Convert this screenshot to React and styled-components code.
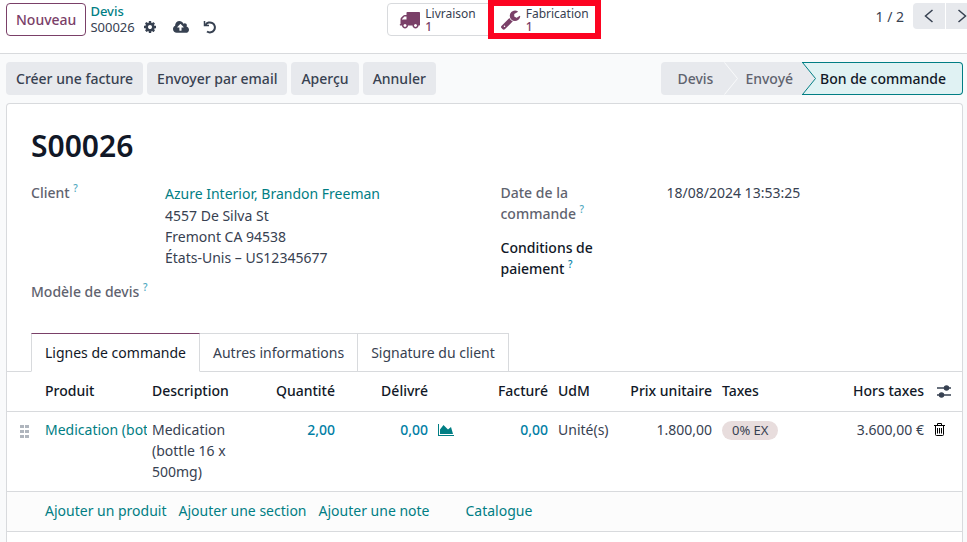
import React, {useState} from 'react';
import styled, {createGlobalStyle, css} from 'styled-components';

// ---- colours ------
const border = '#d8dadd';
const teal = '#017e84';
const plum = '#7a4068';
const text = '#374151';
const dark = '#111827';
const muted = '#5f636f';
const grey = '#e7e9ed';

// ---- styles ------
const GlobalStyle = createGlobalStyle`
    *, *::before {
        box-sizing: border-box;
    }

    body {
        margin: 0;
        background: #f9fafb;
        color: ${text};
        font-family: "Noto Sans", "Open Sans", sans-serif;
        font-size: 14px;
        line-height: 21px;
    }

    button {
        font: inherit;
        color: inherit;
        border: 0;
        padding: 0;
        background: none;
        cursor: pointer;
    }

    a {
        color: ${teal};
        text-decoration: none;
    }

    svg {
        display: block;
        flex: none;
    }
`;

const Page = styled.div`
    display: flex;
    flex-direction: column;
    min-height: 100vh;
    overflow: hidden;
`;

const ControlPanel = styled.header`
    display: grid;
    grid-template-columns: 1fr auto 1fr;
    align-items: start;
    height: 54px;
    padding: 3px 0 0 6px;
    background: #fff;
    border-bottom: 1px solid ${border};
`;

const Crumbs = styled.div`
    display: flex;
    gap: 4px;
`;

const NewButton = styled.button`
    height: 33px;
    padding: 0 9px;
    border: 1px solid ${plum};
    border-radius: 4px;
    color: ${plum};
    font-weight: 500;
`;

const Trail = styled.nav`
    display: flex;
    flex-direction: column;
    font-size: 13px;
    line-height: 16px;

    a {
        font-weight: 500;
    }
`;

const Current = styled.div`
    display: flex;
    align-items: center;
    gap: 8px;
`;

const RecordActions = styled.div`
    display: flex;
    gap: 14px;
    margin-left: 8px;
`;

const StatButtons = styled.div`
    display: flex;
    margin-left: 12px;
`;

const StatButton = styled.button`
    position: relative;
    display: flex;
    align-items: center;
    gap: 5px;
    height: 33px;
    padding: 0 14px 0 11px;
    border: 1px solid ${border};
    border-radius: 4px 0 0 4px;
    font-size: 12px;
    line-height: 13px;
    text-align: left;

    & + & {
        padding: 0 8px 0 9px;
        border-left: 0;
        border-radius: 0 4px 4px 0;
    }

    svg {
        color: ${plum};
    }

    strong {
        display: block;
        color: ${plum};
        font-weight: 500;
    }

    /* red frame drawn over the button that needs attention */
    ${props => props.$highlight && css`
        &::before {
            content: "";
            position: absolute;
            inset: -4px -4px -4px -3px;
            border: 6px solid #fc0421;
        }
    `}
`;

const Pager = styled.div`
    display: flex;
    align-items: center;
    justify-self: end;
    gap: 1px;
    margin-right: -11px;

    span {
        margin-right: 8px;
    }
`;

const PagerButton = styled.button`
    display: flex;
    align-items: center;
    justify-content: center;
    width: 32px;
    height: 26px;
    background: ${grey};
    border-radius: ${props => props.$side === 'left' ? '4px 0 0 4px' : '0 4px 4px 0'};
`;

const ActionBar = styled.div`
    display: flex;
    justify-content: space-between;
    padding: 8px 4px 8px 6px;
`;

const Actions = styled.div`
    display: flex;
    gap: 4px;
`;

const ActionButton = styled.button`
    height: 33px;
    padding: 0 10px;
    border-radius: 4px;
    background: ${grey};
    font-weight: 500;
    white-space: nowrap;
`;

const StatusBar = styled.div`
    display: flex;
    height: 33px;
`;

const Step = styled.button`
    padding: 0 9px 0 7px;
    background: ${grey};
    color: ${muted};
    font-weight: 500;
    white-space: nowrap;

    &:first-child {
        padding: 0 11px 0 16px;
        border-radius: 4px 0 0 4px;
    }

    ${props => props.$active && css`
        padding: 0 16px 0 4px;
        border: 1px solid ${teal};
        border-left: 0;
        border-radius: 0 4px 4px 0;
        background: #e0f2f3;
        color: ${dark};
    `}
`;

const Sheet = styled.main`
    flex: 1;
    margin: 0 4px 0 6px;
    border: 1px solid ${border};
    border-bottom: 0;
    border-radius: 4px 4px 0 0;
    background: #fff;
`;

const Title = styled.h1`
    margin: 23px 24px 17px;
    color: ${dark};
    font-size: 30px;
    font-weight: 600;
    line-height: 38px;
`;

const FieldGroups = styled.div`
    display: grid;
    grid-template-columns: 1fr 1fr;
    gap: 32px;
    padding: 0 24px;
`;

const Fields = styled.dl`
    display: grid;
    grid-template-columns: ${props => props.$labelWidth}px 1fr;
    align-content: start;
    row-gap: 13px;
    margin: 0;

    dd {
        margin: 0;
    }
`;

const Label = styled.dt`
    max-width: 122px;
    color: ${props => props.$required ? dark : muted};
    font-weight: 500;
`;

const Help = styled.sup`
    color: ${props => props.$strong ? '#0180a5' : '#4fa9c0'};
    font-size: 10px;
    line-height: 0;
`;

const Partner = styled.a`
    display: block;
    line-height: 23px;
`;

const Address = styled.address`
    font-style: normal;
`;

const Tabs = styled.div`
    display: flex;
    margin-top: 31px;
    padding-left: 24px;
    box-shadow: inset 0 -1px ${border};
`;

const Tab = styled.button`
    height: 39px;
    padding: 0 13px;
    border: 1px solid ${border};
    border-left-width: 0;
    white-space: nowrap;

    ${props => props.$active && css`
        border-left-width: 1px;
        border-top-color: ${plum};
        border-bottom-color: #fff;
        background: #fff;
        color: ${dark};
    `}
`;

const Table = styled.table`
    width: 100%;
    table-layout: fixed;
    border-collapse: collapse;

    tr {
        border-bottom: 1px solid ${border};
    }

    tfoot {
        background: #fcfcfc;
    }
`;

const cell = css`
    text-align: ${props => props.$right ? 'right' : 'left'};
    vertical-align: top;
    white-space: ${props => props.$wrap ? 'normal' : 'nowrap'};
`;

const Th = styled.th`
    ${cell}
    padding: 8px 5px 10px;
    color: ${dark};
    font-weight: 500;
`;

const Td = styled.td`
    ${cell}
    padding: 7px 5px 9px;
    overflow: hidden;
`;

const Changed = styled.span`
    color: #0180a5;
    font-weight: 500;
`;

const IconButton = styled.button`
    display: flex;
    align-items: center;
    height: 21px;
    color: ${props => props.$color || text};
`;

const Handle = styled(IconButton)`
    margin-left: 8px;
    height: 24px;
`;

const Tag = styled.span`
    display: inline-block;
    padding: 0 10px;
    border-radius: 10px;
    background: #e8dddd;
    font-size: 13px;
    line-height: 19px;
`;

const AddLinks = styled.div`
    display: flex;
    gap: 12px;
    padding: 1px 0;

    a:last-child {
        margin-left: 24px;
    }
`;

// ---- icons ------
const paths = {
    cog: ['0 0 1792 1792', 'M1152 896q0-106-75-181t-181-75-181 75-75 181 75 181 181 75 181-75 75-181zm512-109v222q0 12-8 23t-20 13l-185 28q-19 54-39 91 35 50 107 138 10 12 10 25t-9 23q-27 37-99 108t-94 71q-12 0-26-9l-138-108q-44 23-91 38-16 136-29 186-7 28-36 28h-222q-14 0-24.5-8.5t-11.5-21.5l-28-184q-49-16-90-37l-141 107q-10 9-25 9-14 0-25-11-126-114-165-168-7-10-7-23 0-12 8-23 15-21 51-66.5t54-70.5q-27-50-41-99l-183-27q-13-2-21-12.5t-8-23.5v-222q0-12 8-23t19-13l186-28q14-46 39-92-40-57-107-138-10-12-10-24 0-10 9-23 26-36 98.5-107.5t94.5-71.5q13 0 26 10l138 107q44-23 91-38 16-136 29-186 7-28 36-28h222q14 0 24.5 8.5t11.5 21.5l28 184q49 16 90 37l142-107q9-9 24-9 13 0 25 10 129 119 165 170 7 8 7 22 0 12-8 23-15 21-51 66.5t-54 70.5q26 50 41 98l183 28q13 2 21 12.5t8 23.5z'],
    cloud: ['-64 0 1920 1792', 'M1216 864q0-14-9-23l-352-352q-9-9-23-9t-23 9l-351 351q-10 12-10 24 0 14 9 23t23 9h224v352q0 13 9.5 22.5t22.5 9.5h192q13 0 22.5-9.5t9.5-22.5v-352h224q13 0 22.5-9.5t9.5-22.5zm640 288q0 159-112.5 271.5t-271.5 112.5h-1088q-185 0-316.5-131.5t-131.5-316.5q0-130 70-240t188-165q-2-30-2-43 0-212 150-362t362-150q156 0 285.5 87t188.5 231q71-62 166-62 106 0 181 75t75 181q0 76-41 138 130 31 213.5 135.5t83.5 238.5z'],
    truck: ['0 0 1792 1792', 'M640 1408q0-52-38-90t-90-38-90 38-38 90 38 90 90 38 90-38 38-90zm-384-512h384v-256h-158q-13 0-22 9l-195 195q-9 9-9 22v30zm1280 512q0-52-38-90t-90-38-90 38-38 90 38 90 90 38 90-38 38-90zm256-1088v1024q0 15-4 26.5t-13.5 18.5-16.5 11.5-23.5 6-22.5 2-25.5 0-22.5-.5q0 106-75 181t-181 75-181-75-75-181h-384q0 106-75 181t-181 75-181-75-75-181h-64q-3 0-22.5.5t-25.5 0-22.5-2-23.5-6-16.5-11.5-13.5-18.5-4-26.5q0-26 19-45t45-19v-320q0-8-.5-35t0-38 2.5-34.5 6.5-37 14-30.5 22.5-30l198-198q19-19 50.5-32t58.5-13h160v-192q0-26 19-45t45-19h1024q26 0 45 19t19 45z'],
    wrench: ['0 0 1792 1792', 'M448 1472q0-26-19-45t-45-19-45 19-19 45 19 45 45 19 45-19 19-45zm644-420l-682 682q-37 37-90 37-52 0-91-37l-106-108q-38-36-38-90 0-53 38-91l681-681q39 98 114.5 173.5t173.5 114.5zm634-435q0 39-23 106-47 134-164.5 217.5t-258.5 83.5q-185 0-316.5-131.5t-131.5-316.5 131.5-316.5 316.5-131.5q58 0 121.5 16.5t107.5 46.5q16 11 16 28t-16 28l-293 169v224l193 107q5-3 79-48.5t135.5-81 70.5-35.5q15 0 23.5 10t8.5 25z'],
    chart: ['0 0 2048 1792', 'M2048 1536v128h-2048v-1536h128v1408h1920zm-384-1024l256 896h-1664v-576l448-576 576 576z'],
    grip: ['0 0 9 13', 'M0 0h4v3H0zM5 0h4v3H5zM0 5h4v3H0zM5 5h4v3H5zM0 10h4v3H0zM5 10h4v3H5z'],
};

function Icon({name, width, height}) {
    const [viewBox, d] = paths[name];
    return (
        <svg width={width} height={height || width} viewBox={viewBox} fill="currentColor" aria-hidden="true">
            <path d={d}/>
        </svg>
    );
}

function StrokeIcon({width, height, children, strokeWidth = 1.5}) {
    return (
        <svg width={width} height={height} viewBox={`0 0 ${width} ${height}`} fill="none" stroke="currentColor"
             strokeWidth={strokeWidth} aria-hidden="true">
            {children}
        </svg>
    );
}

/**
 * Pointed joint between two steps of the status bar.
 */
function Arrow({active}) {
    return (
        <svg width="14" height="33" viewBox="0 0 14 33" aria-hidden="true">
            <rect width="14" height="33" fill={grey}/>
            {active && <path d="M0 0H14V33H0L13.5 16.5Z" fill="#e0f2f3"/>}
            {active && <path d="M0 .5H14M0 32.5H14" stroke={teal}/>}
            <path d="M.5 .5L13.5 16.5L.5 32.5" fill="none" stroke={active ? teal : '#f9fafb'}/>
        </svg>
    );
}

// ---- data ------
const tabs = ['Lignes de commande', 'Autres informations', 'Signature du client'];
const actions = ['Créer une facture', 'Envoyer par email', 'Aperçu', 'Annuler'];
const links = ['Ajouter un produit', 'Ajouter une section', 'Ajouter une note', 'Catalogue'];

const Col = styled.col`
    width: ${props => props.$width}px;
`;
const columns = [33, 107, 101, 92, 93, 24, 96, 68, 96, 75, 137, 33];

function OrderLines() {
    return (
        <Table>
            <colgroup>
                {columns.map((width, index) => <Col key={index} $width={width}/>)}
            </colgroup>
            <thead>
                <tr>
                    <Th/>
                    <Th>Produit</Th>
                    <Th>Description</Th>
                    <Th $right>Quantité</Th>
                    <Th $right>Délivré</Th>
                    <Th/>
                    <Th $right>Facturé</Th>
                    <Th>UdM</Th>
                    <Th $right>Prix unitaire</Th>
                    <Th>Taxes</Th>
                    <Th $right>Hors taxes</Th>
                    <Th>
                        <IconButton aria-label="Colonnes">
                            <StrokeIcon width={18} height={14}>
                                <path d="M3 4H17M3 11H17"/>
                                <circle cx="12.5" cy="4" r="2" fill="currentColor"/>
                                <circle cx="7.5" cy="11" r="2" fill="currentColor"/>
                            </StrokeIcon>
                        </IconButton>
                    </Th>
                </tr>
            </thead>
            <tbody>
                <tr>
                    <Td>
                        <Handle $color="#afb5bd" aria-label="Déplacer"><Icon name="grip" width={9} height={13}/></Handle>
                    </Td>
                    <Td><a href="#produit">Medication (bot</a></Td>
                    <Td $wrap>Medication (bottle 16 x 500mg)</Td>
                    <Td $right><Changed>2,00</Changed></Td>
                    <Td $right><Changed>0,00</Changed></Td>
                    <Td>
                        <IconButton $color={teal} aria-label="Prévisions"><Icon name="chart" width={16} height={14}/></IconButton>
                    </Td>
                    <Td $right><Changed>0,00</Changed></Td>
                    <Td>Unité(s)</Td>
                    <Td $right>1.800,00</Td>
                    <Td><Tag>0% EX</Tag></Td>
                    <Td $right>3.600,00 €</Td>
                    <Td>
                        <IconButton $color="#000" aria-label="Supprimer">
                            <StrokeIcon width={11} height={13} strokeWidth={1}>
                                <path d="M0 2.5H11M3.5 2V.5H7.5V2M1.5 3V11.5Q1.5 12.5 2.5 12.5H8.5Q9.5 12.5 9.5 11.5V3M3.5 5V10.5M5.5 5V10.5M7.5 5V10.5"/>
                            </StrokeIcon>
                        </IconButton>
                    </Td>
                </tr>
            </tbody>
            <tfoot>
                <tr>
                    <Td/>
                    <Td colSpan={11}>
                        <AddLinks>
                            {links.map(link => <a href="#lignes" key={link}>{link}</a>)}
                        </AddLinks>
                    </Td>
                </tr>
            </tfoot>
        </Table>
    );
}

function RecordIcons() {
    return (
        <>
            <button aria-label="Actions"><Icon name="cog" width={14}/></button>
            <RecordActions>
                <button aria-label="Enregistrer"><Icon name="cloud" width={16} height={15}/></button>
                <button aria-label="Annuler les modifications">
                    <StrokeIcon width={13} height={13} strokeWidth={2}>
                        <path d="M2.5 4A5 5 0 1 1 4 10.5"/>
                        <path d="M1.5 0V4.5H6" strokeWidth="1.5"/>
                    </StrokeIcon>
                </button>
            </RecordActions>
        </>
    );
}

function App() {
    const [tab, setTab] = useState(0);

    return (
        <Page>
            <GlobalStyle/>
            <ControlPanel>
                <Crumbs>
                    <NewButton>Nouveau</NewButton>
                    <Trail>
                        <a href="#devis">Devis</a>
                        <Current>
                            S00026
                            <RecordIcons/>
                        </Current>
                    </Trail>
                </Crumbs>
                <StatButtons>
                    <StatButton>
                        <Icon name="truck" width={21}/>
                        <span>Livraison<strong>1</strong></span>
                    </StatButton>
                    <StatButton $highlight>
                        <Icon name="wrench" width={21}/>
                        <span>Fabrication<strong>1</strong></span>
                    </StatButton>
                </StatButtons>
                <Pager>
                    <span>1 / 2</span>
                    <PagerButton $side="left" aria-label="Précédent">
                        <StrokeIcon width={10} height={14}><path d="M8.5 1L1.5 7L8.5 13"/></StrokeIcon>
                    </PagerButton>
                    <PagerButton $side="right" aria-label="Suivant">
                        <StrokeIcon width={10} height={14}><path d="M1.5 1L8.5 7L1.5 13"/></StrokeIcon>
                    </PagerButton>
                </Pager>
            </ControlPanel>

            <ActionBar>
                <Actions>
                    {actions.map(action => <ActionButton key={action}>{action}</ActionButton>)}
                </Actions>
                <StatusBar>
                    <Step>Devis</Step>
                    <Arrow/>
                    <Step>Envoyé</Step>
                    <Arrow active/>
                    <Step $active>Bon de commande</Step>
                </StatusBar>
            </ActionBar>

            <Sheet>
                <Title>S00026</Title>
                <FieldGroups>
                    <Fields $labelWidth={134}>
                        <Label>Client <Help>?</Help></Label>
                        <dd>
                            <Partner href="#client">Azure Interior, Brandon Freeman</Partner>
                            <Address>4557 De Silva St<br/>Fremont CA 94538<br/>États-Unis – US12345677</Address>
                        </dd>
                        <Label>Modèle de devis <Help>?</Help></Label>
                        <dd/>
                    </Fields>
                    <Fields $labelWidth={166}>
                        <Label>Date de la commande <Help>?</Help></Label>
                        <dd>18/08/2024 13:53:25</dd>
                        <Label $required>Conditions de paiement <Help $strong>?</Help></Label>
                        <dd/>
                    </Fields>
                </FieldGroups>

                <Tabs role="tablist">
                    {tabs.map((name, index) => (
                        <Tab key={name} role="tab" aria-selected={index === tab} $active={index === tab}
                             onClick={() => setTab(index)}>
                            {name}
                        </Tab>
                    ))}
                </Tabs>
                <OrderLines/>
            </Sheet>
        </Page>
    );
}

export default App;
